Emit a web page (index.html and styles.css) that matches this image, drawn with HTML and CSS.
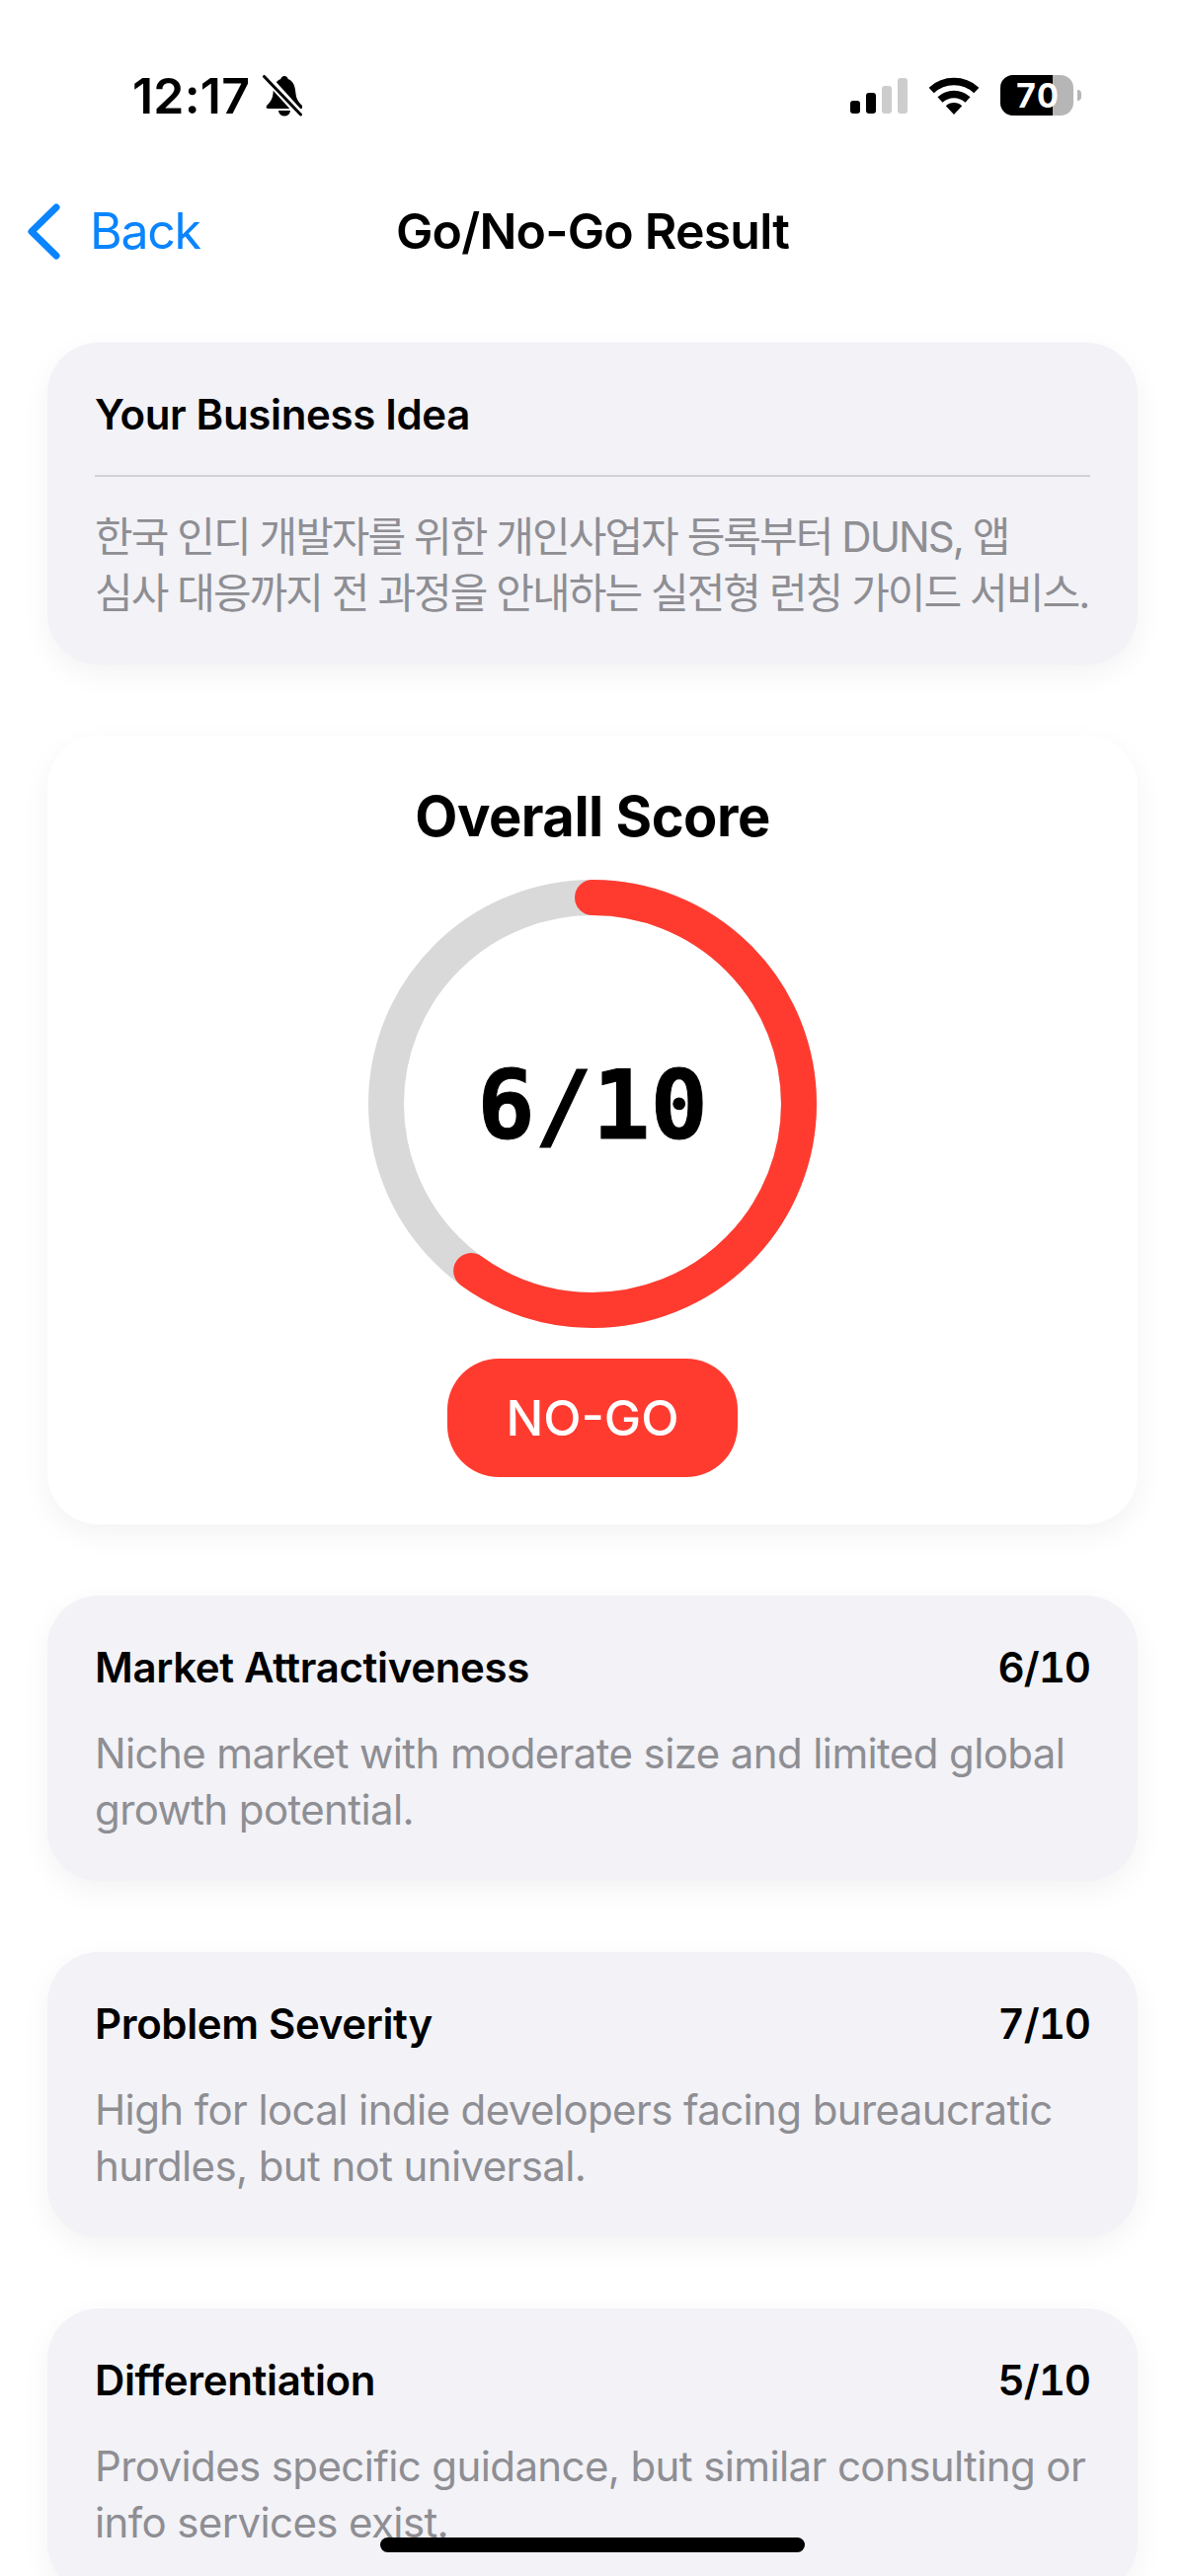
FILE: index.html
```html
<!DOCTYPE html>
<html>
<head>
    <title>Go/No-Go Result</title>
    <meta charset="UTF-8">
    <link rel="stylesheet" href="styles.css">
</head>
<body>
    <div class="status-bar">
        <div class="status-left">
            <span class="time">12:17</span>
            <svg class="bell" viewBox="0 0 40 42" width="40" height="42">
                <path d="M22 1c-2 0-3.500 1.500-3.700 3C12 6.500 11 13 10.500 19c-.4 5-3 8.500-6 11.500-1.500 1.500-1 3.500 1 3.500h33c2 0 2.500-2 1-3.500-3-3-5.600-6.500-6-11.500C33 13 32 6.500 25.700 4 25.500 2.500 24 1 22 1z"/>
                <path d="M16 36h12a6 5.500 0 0 1-12 0z"/>
                <path d="M0 -2L40 42" stroke="#fff" stroke-width="8"/>
                <path d="M1.500 1.500L38.500 40" stroke="#000" stroke-width="3" stroke-linecap="round"/>
            </svg>
        </div>
        <div class="status-right">
            <div class="signal">
                <span class="bar bar-1"></span>
                <span class="bar bar-2"></span>
                <span class="bar bar-3 off"></span>
                <span class="bar bar-4 off"></span>
            </div>
            <svg class="wifi" viewBox="0 0 50 38" width="50" height="38">
                <path d="M2.200 13.500A33.500 33.500 0 0 1 47.800 13.500" fill="none" stroke="#000" stroke-width="7.500"/>
                <path d="M11 23A20.500 20.500 0 0 1 39 23" fill="none" stroke="#000" stroke-width="7.500"/>
                <path d="M25 38L16.800 29.200A12 12 0 0 1 33.200 29.200Z"/>
            </svg>
            <div class="battery">
                <div class="battery-body">
                    <span class="battery-level"></span>
                    <span class="battery-text">70</span>
                </div>
                <span class="battery-nub"></span>
            </div>
        </div>
    </div>

    <div class="nav">
        <div class="back">
            <svg class="chevron" viewBox="0 0 33 57" width="33" height="57">
                <path d="M29 4L4 28.500L29 53" fill="none" stroke="#0a84ff" stroke-width="7" stroke-linecap="round" stroke-linejoin="round"/>
            </svg>
            <span>Back</span>
        </div>
        <div class="nav-title">Go/No-Go Result</div>
    </div>

    <div class="content">
        <div class="card idea-card">
            <div class="card-title">Your Business Idea</div>
            <div class="divider"></div>
            <div class="card-text idea-text">한국 인디 개발자를 위한 개인사업자 등록부터 DUNS, 앱<br>심사 대응까지 전 과정을 안내하는 실전형 런칭 가이드 서비스.</div>
        </div>

        <div class="card score-card">
            <div class="score-title">Overall Score</div>
            <div class="ring">
                <svg viewBox="0 0 454 454" width="454" height="454">
                    <circle cx="227" cy="227" r="209" fill="none" stroke="#d9d9d9" stroke-width="36"/>
                    <circle class="ring-value" cx="227" cy="227" r="209" fill="none" stroke="#ff3b30" stroke-width="36" stroke-linecap="round" pathLength="100" stroke-dasharray="60 100"/>
                </svg>
                <div class="ring-label">6/10</div>
            </div>
            <div class="verdict">NO-GO</div>
        </div>

        <div class="card">
            <div class="metric-head">
                <div class="card-title">Market Attractiveness</div>
                <div class="card-title metric-score">6/10</div>
            </div>
            <div class="card-text">Niche market with moderate size and limited global growth potential.</div>
        </div>

        <div class="card">
            <div class="metric-head">
                <div class="card-title">Problem Severity</div>
                <div class="card-title metric-score">7/10</div>
            </div>
            <div class="card-text">High for local indie developers facing bureaucratic hurdles, but not universal.</div>
        </div>

        <div class="card">
            <div class="metric-head">
                <div class="card-title">Differentiation</div>
                <div class="card-title metric-score">5/10</div>
            </div>
            <div class="card-text">Provides specific guidance, but similar consulting or info services exist.</div>
        </div>
    </div>

    <div class="home-indicator"></div>
</body>
</html>
```

FILE: styles.css
```css
html, body {
    margin: 0;
    padding: 0;
    height: 2609px;
    overflow: hidden;
    background: #fff;
    color: #000;
    font-family: "Inter", "Noto Sans CJK KR", sans-serif;
}

/* status bar */
.status-bar {
    height: 190px;
    box-sizing: border-box;
    padding: 76px 105px 0 134px;
    display: flex;
    justify-content: space-between;
    align-items: flex-start;
}

.status-left {
    display: flex;
    align-items: center;
    gap: 13px;
}

.time {
    font-size: 50px;
    line-height: 42px;
    font-weight: 600;
    letter-spacing: 0.200px;
}

.bell {
    display: block;
}

.status-right {
    display: flex;
    align-items: flex-start;
    gap: 22px;
}

.signal {
    display: flex;
    align-items: flex-end;
    gap: 6px;
    height: 36px;
    margin-top: 3px;
}

.bar {
    width: 10px;
    background: #000;
    border-radius: 3px;
}

.bar.off { background: #cdcdcd; }
.bar-1 { height: 13px; }
.bar-2 { height: 21px; }
.bar-3 { height: 28px; }
.bar-4 { height: 36px; }

.wifi {
    display: block;
    margin-top: 2px;
}

.battery {
    display: flex;
    align-items: center;
    gap: 4px;
    height: 41px;
}

.battery-body {
    position: relative;
    width: 74px;
    height: 41px;
    border-radius: 13px;
    background: #b6b6b6;
    overflow: hidden;
}

.battery-level {
    position: absolute;
    left: 0;
    top: 0;
    bottom: 0;
    width: 53px;
    background: #000;
}

.battery-text {
    position: absolute;
    left: 15px;
    top: 0;
    line-height: 41px;
    font-size: 34px;
    font-weight: 700;
    color: #fff;
    font-variant-numeric: tabular-nums;
}

.battery-nub {
    width: 4px;
    height: 11px;
    background: #b6b6b6;
    border-radius: 0 4px 4px 0;
}

/* nav */
.nav {
    position: relative;
    height: 88px;
    box-sizing: border-box;
    padding-left: 28px;
    display: flex;
    align-items: center;
    margin-bottom: 69px;
}

.back {
    display: flex;
    align-items: center;
    gap: 30px;
    color: #0a84ff;
    font-size: 50px;
    letter-spacing: -1.300px;
}

.chevron {
    display: block;
}

.nav-title {
    position: absolute;
    left: 0;
    right: 0;
    text-align: center;
    font-size: 50px;
    font-weight: 600;
    letter-spacing: -0.800px;
}

/* cards */
.content {
    padding: 0 48px;
    display: flex;
    flex-direction: column;
    gap: 72px;
}

.card {
    background: #f2f2f7;
    border-radius: 52px;
    padding: 47px 48px 44px;
    box-shadow: 0 10px 30px rgba(0, 0, 0, 0.05);
}

.card-title {
    font-size: 42px;
    line-height: 52px;
    font-weight: 600;
    letter-spacing: -0.350px;
}

.metric-score {
    font-variant-numeric: tabular-nums;
    letter-spacing: -1px;
}

.card-text {
    font-size: 42px;
    line-height: 57px;
    color: #8e8e93;
    letter-spacing: -0.610px;
}

.idea-text {
    letter-spacing: -1.950px;
    white-space: nowrap;
}

.divider {
    height: 2px;
    background: #d1d1d6;
    margin: 35px 0 32px;
}

.metric-head {
    display: flex;
    justify-content: space-between;
    margin-bottom: 32px;
}

.score-card {
    background: #fff;
    padding: 48px 48px 48px;
    display: flex;
    flex-direction: column;
    align-items: center;
}

.score-title {
    font-size: 56px;
    line-height: 68px;
    font-weight: 700;
    letter-spacing: -0.500px;
    margin-bottom: 30px;
}

.ring {
    position: relative;
    width: 454px;
    height: 454px;
    margin-bottom: 31px;
}

.ring svg {
    display: block;
}

.ring-value {
    transform: rotate(-90deg);
    transform-origin: 227px 227px;
}

.ring-label {
    position: absolute;
    left: 0;
    right: 0;
    top: 2px;
    bottom: 0;
    display: flex;
    align-items: center;
    justify-content: center;
    font-family: "DejaVu Sans Mono", "Liberation Mono", monospace;
    font-size: 97px;
    font-weight: 700;
    -webkit-text-stroke: 1px #000;
}

.verdict {
    width: 294px;
    height: 120px;
    border-radius: 52px;
    background: #ff3b30;
    color: #fff;
    display: flex;
    align-items: center;
    justify-content: center;
    font-size: 50px;
    font-weight: 500;
}

.home-indicator {
    position: fixed;
    left: 385px;
    top: 2570px;
    width: 430px;
    height: 15px;
    border-radius: 8px;
    background: #000;
}
```
